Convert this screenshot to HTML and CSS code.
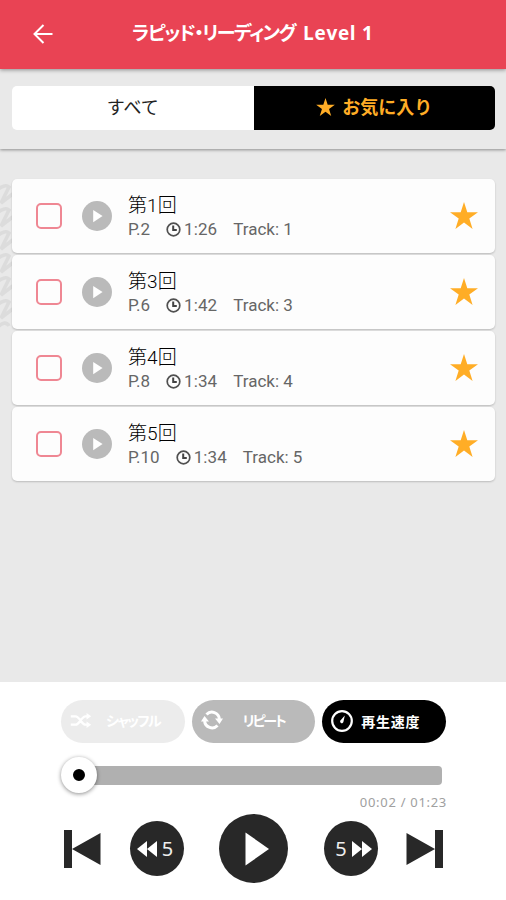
FILE: index.html
```html
<!DOCTYPE html>
<html lang="ja">
<head>
<meta charset="utf-8">
<title>ラピッド・リーディング Level 1</title>
<link rel="stylesheet" href="styles.css">
</head>
<body>
<svg width="0" height="0" class="defs">
  <defs>
    <symbol id="star" viewBox="0 0 28 27"><path d="M14 0l3.3 10.2H28l-8.7 6.3L22.6 27 14 20.6 5.4 27l3.3-10.5L0 10.2h10.7z"/></symbol>
    <symbol id="play" viewBox="0 0 30 30"><circle cx="15" cy="15" r="15"/><path d="M11.2 9v12.2l9.4-6.1z" fill="#fff"/></symbol>
    <symbol id="clock" viewBox="0 0 15 15"><circle cx="7.5" cy="7.5" r="6.3" fill="none" stroke="#505050" stroke-width="1.7"/><path d="M7.2 3.6v4.3h3.6" fill="none" stroke="#424242" stroke-width="2"/></symbol>
    <symbol id="skip" viewBox="0 0 37 38"><path d="M0 0h8v38H0zM8 19L36.500 3v32z"/></symbol>
    <symbol id="seek" viewBox="0 0 20 16"><path d="M10 0v16L0 8zM20 0v16L10 8z"/></symbol>
  </defs>
</svg>
<header class="header">
  <svg class="back" viewBox="0 0 20 20"><path d="M19.500 10H1.500M10.500 1L1.500 10l9 9"/></svg>
  <h1 class="title"><span class="title-ja">ラピッド・リーディング</span> <span class="title-en">Level 1</span></h1>
</header>
<nav class="tabs">
  <div class="tab"><span>すべて</span></div>
  <div class="tab tab-active"><svg class="tab-star"><use href="#star"/></svg><span>お気に入り</span></div>
</nav>
<main class="content">
  <svg class="pattern" viewBox="0 0 14 150"><path d="M-4 10Q5 2 9 6L1 22 14 12M-4 33Q5 25 9 29L1 45 14 35M-4 56Q5 48 9 52L1 68 14 58M-4 79Q5 71 9 75L1 91 14 81M-4 102Q5 94 9 98L1 114 14 104M-4 125Q5 117 9 121L1 137 14 127M-4 148Q5 138 9 145"/></svg>
  <ul class="list">
    <li class="row"><i class="check"></i><svg class="row-play"><use href="#play"/></svg><div class="info"><div class="name">第1回</div><div class="meta"><span>P.2</span><span class="time"><svg class="clock"><use href="#clock"/></svg>1:26</span><span>Track: 1</span></div></div><svg class="fav"><use href="#star"/></svg></li>
    <li class="row"><i class="check"></i><svg class="row-play"><use href="#play"/></svg><div class="info"><div class="name">第3回</div><div class="meta"><span>P.6</span><span class="time"><svg class="clock"><use href="#clock"/></svg>1:42</span><span>Track: 3</span></div></div><svg class="fav"><use href="#star"/></svg></li>
    <li class="row"><i class="check"></i><svg class="row-play"><use href="#play"/></svg><div class="info"><div class="name">第4回</div><div class="meta"><span>P.8</span><span class="time"><svg class="clock"><use href="#clock"/></svg>1:34</span><span>Track: 4</span></div></div><svg class="fav"><use href="#star"/></svg></li>
    <li class="row"><i class="check"></i><svg class="row-play"><use href="#play"/></svg><div class="info"><div class="name">第5回</div><div class="meta"><span>P.10</span><span class="time"><svg class="clock"><use href="#clock"/></svg>1:34</span><span>Track: 5</span></div></div><svg class="fav"><use href="#star"/></svg></li>
  </ul>
</main>
<footer class="player">
  <div class="modes">
    <div class="mode shuffle"><svg viewBox="0 0 22 14"><path d="M0 2.500h5c5 0 6 9 11 9h2M0 11.500h5c5 0 6-9 11-9h2" fill="none" stroke="#fff" stroke-width="2.500"/><path d="M17-1l5 3.500-5 3.500zM17 8l5 3.500-5 3.500z" fill="#fff"/></svg><span>シャッフル</span></div>
    <div class="mode repeat"><svg viewBox="0 0 22 20"><path d="M5.500 4.500A7.500 7.500 0 0 1 18.400 9M16.500 15.500A7.500 7.500 0 0 1 3.600 11" fill="none" stroke="#fff" stroke-width="3"/><path d="M14 8.500H22l-3.500 5.500zM0 11.500h8L3.500 6z" fill="#fff"/></svg><span>リピート</span></div>
    <div class="mode speed"><svg viewBox="0 0 22 22"><circle cx="11" cy="11" r="9.800" fill="none" stroke="#fff" stroke-width="2.200"/><path d="M13.800 5.500l-1.300 6a1.700 1.700 0 1 1-2.600-1.500z" fill="#fff"/></svg><span>再生速度</span></div>
  </div>
  <div class="slider"><div class="track"></div><div class="knob"></div></div>
  <div class="clocktime">00:02 / 01:23</div>
  <div class="controls">
    <svg class="skip"><use href="#skip"/></svg>
    <div class="jump back5"><svg><use href="#seek"/></svg><span>5</span></div>
    <svg class="main-play" viewBox="0 0 69 69"><circle cx="34.500" cy="34.500" r="34.500"/><path d="M26.500 18.500v33l23.500-16.500z" fill="#fff"/></svg>
    <div class="jump fwd5"><span>5</span><svg class="flip"><use href="#seek"/></svg></div>
    <svg class="skip flip"><use href="#skip"/></svg>
  </div>
</footer>
</body>
</html>
```
FILE: styles.css
```css
* { box-sizing: border-box; }
body { margin: 0; height: 900px; display: flex; flex-direction: column; overflow: hidden; background: #e9e9e9; font-family: Roboto, "Noto Sans CJK JP", sans-serif; }
svg { display: block; flex: none; }
.defs { position: absolute; }
.header { height: 69px; flex: none; display: flex; align-items: center; padding-left: 33px; background: #e94354; box-shadow: 0 1px 4px rgba(0,0,0,.4); position: relative; z-index: 2; }
.back { width: 20px; height: 20px; fill: none; stroke: #fff; stroke-width: 2; margin-bottom: 1px; }
.title { margin: 0 0 4px 79px; display: flex; gap: 8px; align-items: baseline; color: #fff; font-size: 19px; line-height: 28px; font-weight: 700; white-space: nowrap; }
.title-ja { font-family: "Noto Sans CJK JP", sans-serif; font-feature-settings: "palt"; letter-spacing: -1.5px; }
.title-en { font-family: "Open Sans", sans-serif; letter-spacing: .7px; }
.tabs { height: 80px; flex: none; display: flex; padding: 17px 11px 19px 12px; box-shadow: 0 1px 3px rgba(0,0,0,.4); z-index: 1; background: #e9e9e9; }
.tab { flex: 1; display: flex; align-items: center; justify-content: center; background: #fff; border-radius: 5px 0 0 5px; font: 400 18px/26px "Noto Sans CJK JP", sans-serif; color: #222; }
.tab span { margin-bottom: 4px; }
.tab-active { background: #000; color: #ffad26; border-radius: 0 5px 5px 0; gap: 7px; font-weight: 700; }
.tab-star { width: 19px; height: 18px; fill: #ffad26; margin-bottom: 2px; }
.content { flex: 1; position: relative; padding: 30px 11px 0 12px; }
.pattern { position: absolute; left: 0; top: 32px; width: 14px; height: 150px; fill: none; stroke: #dcdcdc; stroke-width: 3.5; }
.list { list-style: none; margin: 0; padding: 0; display: flex; flex-direction: column; gap: 2px; position: relative; }
.row { height: 74px; display: flex; align-items: center; padding: 0 17px 1px 24px; background: #fdfdfd; border-radius: 5px; box-shadow: 0 1px 2px rgba(0,0,0,.2); }
.check { width: 26px; height: 26px; border: 2px solid #ef8793; border-radius: 5px; flex: none; }
.row-play { width: 30px; height: 30px; margin-left: 20px; fill: #bababa; }
.info { flex: 1; margin-left: 16px; }
.name { font-size: 19px; line-height: 26px; font-weight: 300; letter-spacing: .1px; color: #000; }
.meta { display: flex; gap: 16px; font-size: 17px; line-height: 20px; color: #666; }
.time { display: flex; align-items: center; gap: 3px; letter-spacing: .1px; }
.clock { width: 15px; height: 15px; margin-top: 2px; }
.fav { width: 28px; height: 27px; fill: #ffad26; }
.player { height: 218px; flex: none; background: #fff; padding: 18px 60px 0 61px; }
.modes { display: flex; gap: 7px; }
.mode { flex: 1; height: 43px; border-radius: 22px; display: flex; align-items: center; color: #fff; font: 700 14px/20px "Noto Sans CJK JP", sans-serif; white-space: nowrap; }
.shuffle { background: #ececec; padding: 0 0 3px 9px; }
.shuffle svg { width: 22px; height: 13px; margin-right: 14px; overflow: visible; }
.shuffle span { font-feature-settings: "palt"; letter-spacing: -1.8px; }
.repeat { background: #bababa; padding: 0 0 3px 9px; }
.repeat svg { width: 22px; height: 20px; margin-right: 20px; }
.repeat span { font-feature-settings: "palt"; letter-spacing: -2.2px; }
.speed { background: #000; padding: 0 0 1px 9px; }
.speed svg { width: 22px; height: 22px; margin-right: 8px; }
.speed span { letter-spacing: .7px; }
.slider { height: 36px; margin-top: 14px; display: flex; align-items: center; position: relative; padding-right: 4px; }
.track { flex: 1; height: 19px; background: #b0b0b0; border-radius: 4px; margin-left: 10px; }
.knob { position: absolute; left: 0; top: 0; width: 36px; height: 36px; border-radius: 50%; border: 12px solid #fff; background: #000; box-shadow: 0 1px 4px rgba(0,0,0,.45); }
.clocktime { text-align: right; font: 13px/18px "Noto Sans", sans-serif; letter-spacing: .7px; margin-right: -1px; color: #a0a0a0; }
.controls { display: flex; align-items: center; margin: 3px 0 0 3px; fill: #282828; }
.skip { width: 37px; height: 38px; }
.jump { width: 54px; height: 55px; border-radius: 50%; background: #282828; color: #eee; display: flex; align-items: center; justify-content: center; font: 20px/27px "Noto Sans", sans-serif; gap: 5px; }
.jump svg { width: 20px; height: 16px; fill: #fff; }
.back5 { margin-left: 29px; padding-right: 4px; }
.fwd5 { margin-right: 28px; padding-left: 5px; }
.main-play { width: 69px; height: 69px; margin: 0 36px 0 35px; }
.flip { transform: scaleX(-1); }
```
